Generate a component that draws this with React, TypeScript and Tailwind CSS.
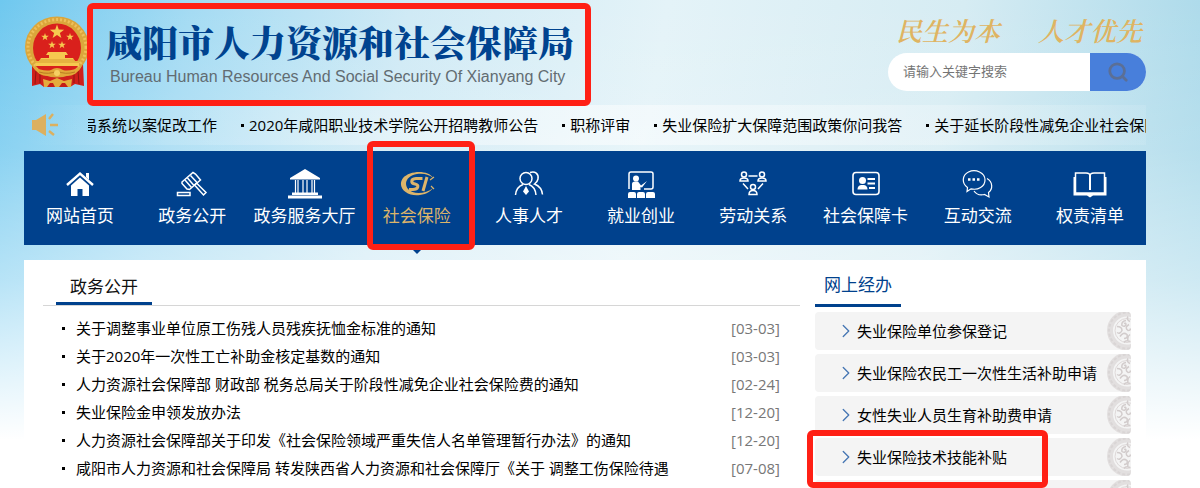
import React from "react";
import { ChevronRight, Search } from "lucide-react";

const star = (cx: number, cy: number, r: number) =>
  Array.from({ length: 10 }, (_, i) => {
    const a = (Math.PI / 5) * i - Math.PI / 2;
    const d = i % 2 ? r * 0.4 : r;
    return `${(cx + d * Math.cos(a)).toFixed(2)},${(cy + d * Math.sin(a)).toFixed(2)}`;
  }).join(" ");

const Emblem = () => (
  <svg viewBox="0 0 66 72" className="h-[72px] w-[66px] shrink-0" aria-hidden="true">
    <path d="M8 48 L8 70 L16 68 L20 71 H46 L51 68 L60 70 L59 48 Z" fill="#cf1f1b" />
    <path d="M12 55 L11 68 M16 58 V67 M54 55 L55 68 M50 58 V67" stroke="#8f1712" strokeWidth="1" />
    <ellipse cx="33" cy="31" rx="32" ry="30.5" fill="#dba63b" />
    <ellipse cx="33" cy="31" rx="29" ry="27.5" fill="none" stroke="#eec05a" strokeWidth="3" strokeDasharray="2 2" />
    <ellipse cx="33" cy="32" rx="24" ry="24.5" fill="#d9201c" />
    <g fill="#f6c94f">
      <polygon points={star(33, 16, 7.5)} />
      <polygon points={star(21, 21, 4)} />
      <polygon points={star(46, 21, 4)} />
      <polygon points={star(28, 29, 4)} />
      <polygon points={star(38, 29, 4)} />
      <path d="M24 36 H42 L44 39 H22 Z M25 39 H41 V42 H25 Z M17 42 H49 L51 45 H15 Z M11 45 H55 V50 H12 Z" />
    </g>
    <path d="M11 46 H55 M16 44 H50" stroke="#c98a26" strokeWidth="0.7" />
    <path d="M12 50 H54 L48 57 H18 Z" fill="#d9201c" />
    <path d="M8 50 Q20 56 27 54 Q33 50 39 54 Q46 56 58 50 Q53 60 42 60 H24 Q14 60 8 50 Z" fill="#e2a838" />
    <path d="M15 56 Q25 59 33 55 Q41 59 51 56" fill="none" stroke="#b97c20" strokeWidth="1" />
    <circle cx="33" cy="57" r="3" fill="#f6cf62" />
    <path d="M19 63 L26 65 L33 62 L40 65 L48 63 L47 71 H20 Z" fill="#e5ac3c" />
    <path d="M23 71 L26 67 H29 L31 71 M35 71 L38 67 H41 L44 71" fill="#c41d18" />
  </svg>
);

const Speaker = () => (
  <svg viewBox="0 0 28 26" className="h-[26px] w-7 shrink-0" aria-hidden="true">
    <path d="M1 8 H5 L15 2 V24 L5 18 H1 Z" fill="#dcb05f" />
    <path d="M18 7 L22 2 M19 13 H27 M18 19 L23 23" stroke="#dcb05f" strokeWidth="2.4" fill="none" />
  </svg>
);

const Seal = () => (
  <svg viewBox="0 0 25 37" className="h-full w-[25px]" aria-hidden="true">
    <g fill="none" stroke="#ddd8d8">
      <circle cx="21" cy="18" r="17" strokeWidth="6" stroke="#e2dfdf" />
      <circle cx="21" cy="18" r="18" strokeWidth="2" strokeDasharray="3 2" stroke="#d9d5d5" />
      <circle cx="21" cy="18" r="12" strokeWidth="1" />
      <path
        strokeWidth="1.5"
        stroke="#d2cccc"
        d="M20 8 q-5 1 -4 5 q3 2 4 -1 q0 -2 -2 -1 M11 14 q5 0 5 4 q-2 4 -5 2 M23 12 q-5 3 -1 6 q3 0 2 -2 M14 24 q3 -5 7 -2 q1 4 -3 4 M24 22 q-3 2 -2 6 M18 30 q2 -3 6 -1 M22 4 q-2 3 2 5"
      />
    </g>
  </svg>
);

const NavIcon = ({ children }: { children: React.ReactNode }) => (
  <svg
    viewBox="0 0 36 30"
    className="h-[30px] w-9"
    fill="none"
    stroke="currentColor"
    strokeWidth="1.5"
    aria-hidden="true"
  >
    {children}
  </svg>
);

const icons = {
  home: (
    <NavIcon>
      <path d="M5 16 L18 4.5 L31 16" strokeWidth="2.4" />
      <path d="M24 4 H27 V11 L24 8 Z" fill="currentColor" stroke="none" />
      <path d="M9 16.5 L18 8.5 L27 16.5 V27 H20.5 V20 H15.5 V27 H9 Z" fill="currentColor" stroke="none" />
    </NavIcon>
  ),
  gavel: (
    <NavIcon>
      <path d="M3.5 23.5 H16 V26.5 H3.5 Z" />
      <path d="M8 13 L19 3.5 L21.5 5 L26.5 11 L15.5 20.5 L13 20 L8 14.5 Z" />
      <path d="M11 11 L17.5 18.5 M13.5 9 L20 16.5 M16.5 6.5 L23 13.5" />
      <path d="M20.5 16 L22.5 14 L32 23.5 L29.5 26 Z" />
    </NavIcon>
  ),
  bank: (
    <NavIcon>
      <path d="M18 0 L33 9 V10.5 H3 V9 Z M1 26.5 H35 V29.5 H1 Z M5 23.500 H31 V26 H5 Z" fill="currentColor" stroke="none" />
      <path d="M8.5 11 V24 M11 11 V24 M16 11 V24 M20 11 V24 M25 11 V24 M27.5 11 V24" strokeWidth="1.2" />
    </NavIcon>
  ),
  csi: (
    <NavIcon>
      <path
        d="M34 9 C30 1 11 1 4 9 C-3 19 9 28 21 26 C28 25 32 22 34 19 C27 25 14 26 9 20 C4 14 9 6 18 5 C25 4 31 6 34 9 Z"
        fill="currentColor"
        stroke="none"
      />
      <path d="M23.5 9.5 H17 C11 10 12 14.5 16 15 C21 16 19 20.5 14 20.5 H10" strokeWidth="3" />
      <path d="M28 8 L24 22" strokeWidth="3" />
      <path d="M31 11 L35 8 M32 17 L35 20" strokeWidth="1.2" />
    </NavIcon>
  ),
  people: (
    <NavIcon>
      <circle cx="15" cy="9.5" r="6" />
      <path d="M4.5 26 C5 20 8 17 12 15.5 M18 15.5 C22 17 24.5 20 25 26" />
      <path d="M19 3.5 C24 1.5 28 5 27 10 C26.5 12.5 25 14 23.5 15 C28.5 17 31 20 31.5 25.5" />
      <path d="M15 17 L18 22.5 L15 26 L12 22.5 Z" fill="currentColor" stroke="none" />
    </NavIcon>
  ),
  training: (
    <NavIcon>
      <path d="M6 20 V5 Q6 3 8 3 H28 Q30 3 30 5 V18 Q30 20 28 20 H21" />
      <circle cx="13" cy="9.5" r="3" fill="currentColor" stroke="none" />
      <path
        d="M9 21 V15 Q9 12.5 12 12.5 H15 L18 16.5 L24 12 L19 18.5 L17.5 18 V21 Z"
        fill="currentColor"
        stroke="none"
      />
      <path
        d="M5 29 V25 Q5 23 7 23 H11 Q13 23 13 25 V29 Z M14 29 V25 Q14 23 16 23 H20 Q22 23 22 25 V29 Z M23 29 V25 Q23 23 25 23 H30 Q32 23 32 25 V29 Z"
        fill="currentColor"
        stroke="none"
      />
    </NavIcon>
  ),
  relation: (
    <NavIcon>
      <path d="M13.5 7 H22.5 M8 14.5 L13 20 M28 14.5 L23 20" />
      <circle cx="9" cy="5.5" r="2.5" />
      <path d="M5 12 Q5 9 9 9 Q13 9 13 12 Z" />
      <circle cx="27" cy="5.5" r="2.5" />
      <path d="M23 12 Q23 9 27 9 Q31 9 31 12 Z" />
      <circle cx="18" cy="18" r="2.5" />
      <path d="M14 25.5 Q14 21.5 18 21.5 Q22 21.5 22 25.5 Z" />
    </NavIcon>
  ),
  card: (
    <NavIcon>
      <rect x="5" y="3.5" width="26" height="22" rx="3" strokeWidth="1.6" />
      <circle cx="14.5" cy="11.5" r="3.5" fill="currentColor" stroke="none" />
      <path d="M9.5 20.5 Q9.5 16.5 13 16 H16 Q19.5 16.5 19.5 20.5 Z" fill="currentColor" stroke="none" />
      <path d="M19.5 10 H27 M19.5 14.5 H27 M21 19 H27" strokeWidth="1.8" />
    </NavIcon>
  ),
  chat: (
    <NavIcon>
      <path
        d="M7 22.5 L7.5 18.500 C1.5 14.5 2 6 8.5 3 C16 -0.5 25 4 25 11 C25 17.5 18 21.5 11 19.8 Z"
        strokeWidth="1.2"
      />
      <path d="M27 9.5 C33 13 33 20 28.5 23.5 L29 28 L24.5 25.5 C20 26.5 16 25 14 22" strokeWidth="1.2" />
      <path d="M8 10.5 H10.5 M12.500 10.5 H15 M17 10.5 H19.5" strokeWidth="2.4" />
    </NavIcon>
  ),
  book: (
    <NavIcon>
      <path d="M3.5 4 H14 Q18 4 18 7 Q18 4 22 4 H32.5 V24 H3.5 Z" />
      <path d="M18 6 V21" strokeWidth="2" />
      <path d="M1.5 8 H3 V24 H33 V8 H34.500 V26.5 H21 L18 28.5 L15 26.5 H1.5 Z" fill="currentColor" stroke="none" />
    </NavIcon>
  ),
};

const navItems = [
  { label: "网站首页", icon: icons.home },
  { label: "政务公开", icon: icons.gavel },
  { label: "政务服务大厅", icon: icons.bank },
  { label: "社会保险", icon: icons.csi, active: true },
  { label: "人事人才", icon: icons.people },
  { label: "就业创业", icon: icons.training },
  { label: "劳动关系", icon: icons.relation },
  { label: "社会保障卡", icon: icons.card },
  { label: "互动交流", icon: icons.chat },
  { label: "权责清单", icon: icons.book },
];

const tickerItems = [
  "局系统以案促改工作",
  "2020年咸阳职业技术学院公开招聘教师公告",
  "职称评审",
  "失业保险扩大保障范围政策你问我答",
  "关于延长阶段性减免企业社会保险",
];

const news = [
  { title: "关于调整事业单位原工伤残人员残疾抚恤金标准的通知", date: "03-03" },
  { title: "关于2020年一次性工亡补助金核定基数的通知", date: "03-03" },
  { title: "人力资源社会保障部 财政部 税务总局关于阶段性减免企业社会保险费的通知", date: "02-24" },
  { title: "失业保险金申领发放办法", date: "12-20" },
  { title: "人力资源社会保障部关于印发《社会保险领域严重失信人名单管理暂行办法》的通知", date: "12-20" },
  { title: "咸阳市人力资源和社会保障局 转发陕西省人力资源和社会保障厅《关于 调整工伤保险待遇", date: "07-08" },
];

const services = [
  { title: "失业保险单位参保登记" },
  { title: "失业保险农民工一次性生活补助申请" },
  { title: "女性失业人员生育补助费申请" },
  { title: "失业保险技术技能补贴", marked: true },
];

const Mark = ({ className }: { className: string }) => (
  <span className={`pointer-events-none absolute z-10 rounded-md border-[6px] border-[#ff2015] ${className}`} />
);

const Header = () => (
  <header className="flex h-[105px] items-start">
    <div className="pt-4">
      <Emblem />
    </div>
    <div className="relative ml-4 mt-6 whitespace-nowrap">
      <h1 className="font-['Noto_Serif_CJK_SC','Noto_Sans_CJK_SC',sans-serif] text-[36px] font-black leading-9 text-[#00438f]">
        咸阳市人力资源和社会保障局
      </h1>
      <p className="mt-1.5 pl-1 font-['Liberation_Sans',sans-serif] text-base leading-[22px] text-[#626c72]">
        Bureau Human Resources And Social Security Of Xianyang City
      </p>
      <Mark className="-bottom-[18px] -left-[19px] -right-[17px] -top-[21px]" />
    </div>
    <div className="ml-auto w-[258px] pt-4">
      <p className="flex justify-between pl-2 pr-1 font-['Noto_Serif_CJK_SC','Noto_Sans_CJK_SC',sans-serif] text-[26px] font-semibold italic leading-7 text-[#dfb462]">
        <span>民生为本</span>
        <span>人才优先</span>
      </p>
      <form className="mt-[9px] flex h-[38px] overflow-hidden rounded-full bg-white">
        <input
          type="text"
          aria-label="搜索"
          placeholder="请输入关键字搜索"
          className="min-w-0 flex-1 bg-transparent pl-[15px] text-[13px] outline-none placeholder:text-[#757575]"
        />
        <button type="button" aria-label="搜索" className="flex w-14 items-center justify-center bg-[#487fdb]">
          <Search className="h-[22px] w-[22px] text-[#5b6f96]" strokeWidth={3} />
        </button>
      </form>
    </div>
  </header>
);

const Ticker = () => (
  <div className="flex h-10 items-center bg-gradient-to-r from-white/0 via-white/50 to-white/10 pl-[7px]">
    <Speaker />
    <div className="ml-[29px] min-w-0 flex-1 overflow-hidden">
      <ul className="-ml-1.5 flex gap-6 whitespace-nowrap text-[15px] leading-6 text-black">
        {tickerItems.map((item, i) => (
          <li key={item} className="flex shrink-0 items-center">
            {i > 0 && (
              <span className="flex w-2">
                <span className="h-[3px] w-[3px] bg-black" />
              </span>
            )}
            <a href="#">{item}</a>
          </li>
        ))}
      </ul>
    </div>
  </div>
);

const Nav = () => (
  <nav className="mt-1.5 flex h-[94px] bg-[#00418d]">
    {navItems.map((item) => (
      <a
        key={item.label}
        href="#"
        className={`relative flex flex-1 flex-col items-center whitespace-nowrap pt-[18px] text-[17px] leading-6 ${
          item.active ? "text-[#dcb46a]" : "text-white"
        }`}
      >
        {item.icon}
        <span className="mt-[5px]">{item.label}</span>
        {item.active && (
          <>
            <span className="absolute top-full border-x-[9px] border-t-[9px] border-x-transparent border-t-[#00418d]" />
            <Mark className="-bottom-[5px] -top-[10px] left-[6px] w-[108px]" />
          </>
        )}
      </a>
    ))}
  </nav>
);

const NewsPanel = () => (
  <section className="ml-[19px] min-w-0 flex-1">
    <div className="flex h-[46px] items-end border-b border-[#d6d6d6]">
      <h2 className="ml-[13px] border-b-[3px] border-[#00418d] px-3.5 pb-[3px] text-[17px] leading-6 text-[#111]">
        政务公开
      </h2>
    </div>
    <ul className="mt-2 text-[15px] leading-7 text-black">
      {news.map((n) => (
        <li key={n.title} className="flex items-center pl-[19px] pr-5">
          <span className="mr-[11px] h-[3px] w-[3px] shrink-0 bg-black" />
          <a href="#" className="min-w-0 flex-1 truncate">
            {n.title}
          </a>
          <span className="text-[#777]">[{n.date}]</span>
        </li>
      ))}
    </ul>
  </section>
);

const ServicePanel = () => (
  <aside className="ml-[15px] mr-[15px] w-[316px] shrink-0">
    <h2 className="inline-block border-b-[3px] border-[#00418d] px-[9px] pb-[7px] pt-3 align-top text-[17px] leading-[25px] text-[#00418d]">
      网上经办
    </h2>
    <ul className="mt-[5px] space-y-1 text-[15px]">
      {services.map((s) => (
        <li key={s.title} className="relative h-[38px]">
          <a href="#" className="flex h-full items-center overflow-hidden rounded bg-[#f4f4f4] pl-5 text-black">
            <ChevronRight className="h-[22px] w-[22px] text-[#4b7ab5]" strokeWidth={1.5} />
            <span className="flex-1 whitespace-nowrap">{s.title}</span>
            <Seal />
          </a>
          {s.marked && <Mark className="-bottom-3 -left-2 -top-2 w-[241px]" />}
        </li>
      ))}
      <li className="flex h-[38px] justify-end overflow-hidden rounded bg-[#f4f4f4]">
        <Seal />
      </li>
    </ul>
  </aside>
);

export default function App() {
  return (
    <div className="h-screen overflow-hidden bg-[linear-gradient(180deg,transparent_0,rgba(255,255,255,0.15)_150px,rgba(255,255,255,0.45)_280px,white_440px),linear-gradient(100deg,#6fc8ef_0%,#a4dbf3_15%,#cfeaf5_32%,#e4f3f8_52%,#d6ecf3_75%,#a0d5e8_100%)] pl-6 pr-[54px] font-['Open_Sans','Noto_Sans_CJK_SC',sans-serif]">
      <Header />
      <Ticker />
      <Nav />
      <main className="mt-[15px] flex min-h-screen bg-white">
        <NewsPanel />
        <ServicePanel />
      </main>
    </div>
  );
}
